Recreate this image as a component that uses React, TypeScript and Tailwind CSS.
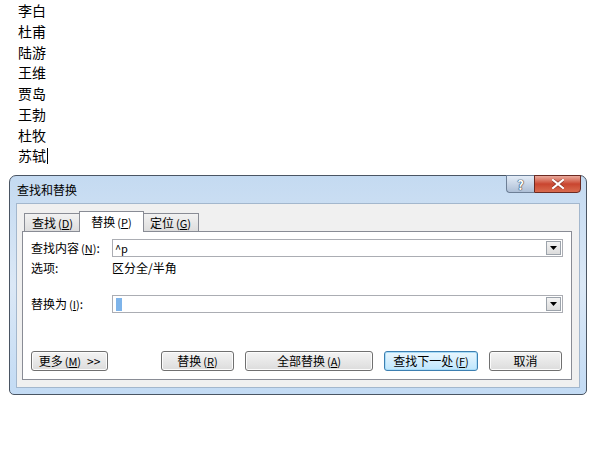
import type { ReactNode } from 'react';

const POETS = ['李白', '杜甫', '陆游', '王维', '贾岛', '王勃', '杜牧'];

function Key({ k }: { k: string }) {
  return (
    <span className="ml-[2px] text-[11px]">
      (<span className="underline underline-offset-[1px]">{k}</span>)
    </span>
  );
}

function Tab({ label, k, active }: { label: string; k: string; active?: boolean }) {
  return (
    <div
      className={
        active
          ? 'relative z-10 -mx-[2px] flex h-[21px] w-[65px] items-center justify-center border border-b-0 border-[#898c95] bg-white'
          : 'mt-[2px] flex h-[19px] w-[57px] items-center justify-center border border-b-0 border-[#898c95] bg-gradient-to-b from-[#f2f2f2] to-[#dcdcdc]'
      }
    >
      {label}
      <Key k={k} />
    </div>
  );
}

function Btn({ children, width, primary }: { children: ReactNode; width: string; primary?: boolean }) {
  return (
    <div
      className={`${width} flex h-[20px] items-center justify-center rounded-[3px] border ${
        primary
          ? 'border-[#3c7fb1] bg-gradient-to-b from-[#eaf6fd] to-[#bee6fd] shadow-[inset_0_0_0_1px_#a9dcf8]'
          : 'border-[#707070] bg-gradient-to-b from-[#f4f4f4] to-[#dcdcdc] shadow-[inset_0_0_0_1px_#fcfcfc]'
      }`}
    >
      {children}
    </div>
  );
}

function Combo({ children }: { children?: ReactNode }) {
  return (
    <div className="flex h-[18px] flex-1 items-center border border-[#abadb3] bg-white pl-[2px] pr-[1px]">
      <div className="flex-1">{children}</div>
      <div className="flex h-[14px] w-[15px] items-center justify-center border border-[#9ca3ab] bg-gradient-to-b from-[#f4f4f4] to-[#dcdcdc]">
        <svg width="7" height="4" viewBox="0 0 7 4">
          <path d="M0 0h7L3.5 4z" fill="#000" />
        </svg>
      </div>
    </div>
  );
}

export default function App() {
  return (
    <div
      className="h-[450px] w-[600px] overflow-hidden bg-white text-black"
      style={{ fontFamily: '"Noto Sans CJK SC", "Liberation Sans", sans-serif' }}
    >
      <div className="pl-[18px] text-[14px] leading-[20.75px]">
        {POETS.map((p) => (
          <div key={p}>{p}</div>
        ))}
        <div className="flex items-center">
          苏轼
          <span className="ml-[1px] inline-block h-[16px] w-[1px] bg-black" />
        </div>
      </div>

      <div className="ml-[9px] mt-[9px] flex h-[220px] w-[578px] flex-col rounded-t-[7px] rounded-b-[5px] border border-[#4a5563] bg-gradient-to-b from-[#c4daf1] via-[#dbe8f6] to-[#c3dbf4] px-[6px] pb-[6px] text-[12px]">
        <div className="flex h-[27px] shrink-0 items-start justify-between">
          <div className="ml-[1px] self-center pt-[1px] text-[12px] text-black">查找和替换</div>
          <div className="-mr-[1px] -mt-[1px] flex">
            <div className="flex h-[18px] w-[28px] items-center justify-center rounded-bl-[4px] border border-r-0 border-[#6d7f96] bg-gradient-to-b from-[#e3ecf7] to-[#aebfd6] text-[13px] font-bold leading-none text-white [text-shadow:0_0_1px_#2c3a4c,0_0_1px_#2c3a4c,0_0_1px_#2c3a4c]">
              ?
            </div>
            <div className="flex h-[18px] w-[47px] items-center justify-center rounded-br-[4px] border border-[#6b2a22] bg-gradient-to-b from-[#e9a99c] via-[#c9452f] to-[#d86a4e]">
              <svg width="12" height="10" viewBox="0 0 12 10">
                <path d="M1 1l10 8M11 1L1 9" stroke="#5a1a12" strokeWidth="3.4" strokeLinecap="square" opacity="0.5" />
                <path d="M1 1l10 8M11 1L1 9" stroke="#fff" strokeWidth="2.2" strokeLinecap="square" />
              </svg>
            </div>
          </div>
        </div>

        <div className="flex flex-1 flex-col border border-[#a3b7cd] bg-[#f0f0f0] pb-[7px] pl-[5px] pr-[7px] pt-[7px]">
          <div className="flex h-[21px] items-end pl-[2px]">
            <Tab label="查找" k="D" />
            <Tab label="替换" k="P" active />
            <Tab label="定位" k="G" />
          </div>
          <div className="-mt-[1px] flex flex-1 flex-col border border-[#898c95] bg-white px-[8px] pt-[7px]">
            <div className="flex items-center">
              <div className="w-[81px]">
                查找内容<Key k="N" />:
              </div>
              <Combo>
                <span className="text-[11px]">^p</span>
              </Combo>
            </div>
            <div className="mt-[2px] flex items-center">
              <div className="w-[81px]">选项:</div>
              <div>区分全/半角</div>
            </div>
            <div className="mt-[18px] flex items-center">
              <div className="w-[81px]">
                替换为<Key k="I" />:
              </div>
              <Combo>
                <span className="ml-[1px] block h-[13px] w-[6px] bg-[#7eb4ea]" />
              </Combo>
            </div>
            <div className="mt-[38px] flex items-center">
              <Btn width="w-[77px]">
                更多<Key k="M" />
                <span className="ml-[6px]">&gt;&gt;</span>
              </Btn>
              <div className="ml-[53px]">
                <Btn width="w-[73px]">
                  替换<Key k="R" />
                </Btn>
              </div>
              <div className="ml-[11px]">
                <Btn width="w-[128px]">
                  全部替换<Key k="A" />
                </Btn>
              </div>
              <div className="ml-[11px]">
                <Btn width="w-[94px]" primary>
                  查找下一处<Key k="F" />
                </Btn>
              </div>
              <div className="ml-[11px]">
                <Btn width="w-[73px]">取消</Btn>
              </div>
            </div>
          </div>
        </div>
      </div>
    </div>
  );
}
